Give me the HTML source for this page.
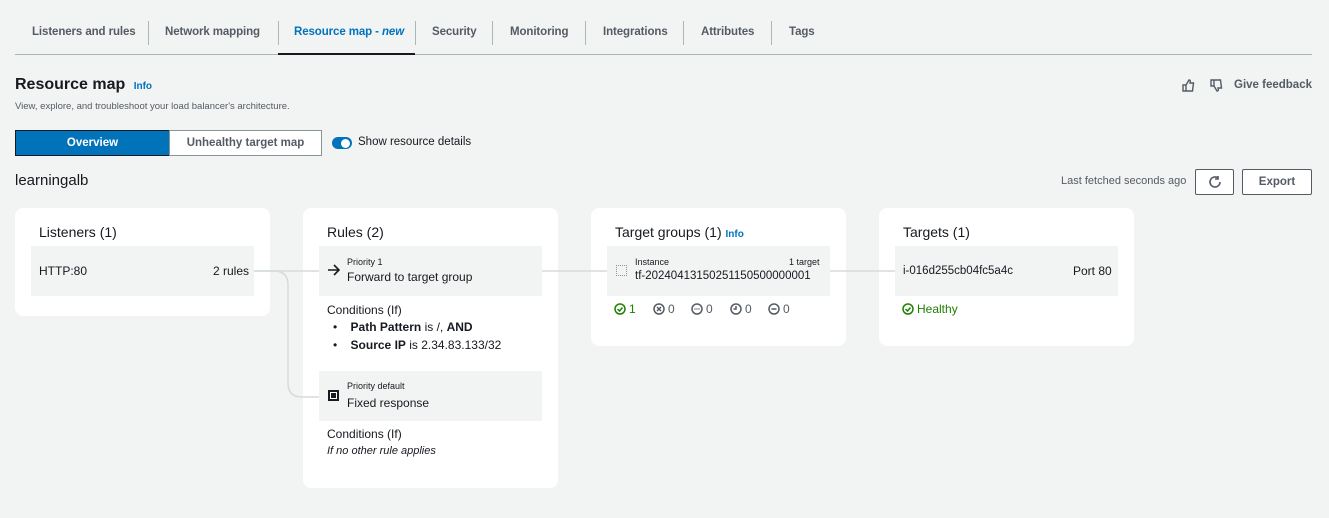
<!DOCTYPE html>
<html><head><style>
*{margin:0;padding:0;box-sizing:border-box}
body{width:1329px;height:518px;background:#f2f3f3;font-family:"Liberation Sans",sans-serif;color:#16191f;position:relative;overflow:hidden;font-size:12px}
.a{position:absolute;white-space:nowrap}
.tab{position:absolute;top:26px;font-size:11.5px;font-weight:bold;color:#545b64;letter-spacing:-0.1px}
.sep{position:absolute;top:21px;width:1px;height:24px;background:#aab7b8}
.card{position:absolute;background:#fff;border-radius:8px}
.box{position:absolute;background:#f2f3f3}
.h{font-size:14px;color:#16191f}
.info{color:#0073bb;font-weight:bold;font-size:10px}
.st{position:absolute;top:302px;font-size:12px;color:#545b64;display:flex;align-items:center;gap:3px}
svg{display:block}
</style></head><body>
<div class="tab" style="left:32px">Listeners and rules</div>
<div class="sep" style="left:148px"></div>
<div class="tab" style="left:165px">Network mapping</div>
<div class="sep" style="left:278px"></div>
<div class="tab" style="left:294px;color:#0073bb">Resource map - <i>new</i></div>
<div class="sep" style="left:415px"></div>
<div class="tab" style="left:432px">Security</div>
<div class="sep" style="left:492px"></div>
<div class="tab" style="left:510px">Monitoring</div>
<div class="sep" style="left:585px"></div>
<div class="tab" style="left:603px">Integrations</div>
<div class="sep" style="left:683px"></div>
<div class="tab" style="left:701px">Attributes</div>
<div class="sep" style="left:771px"></div>
<div class="tab" style="left:789px">Tags</div>
<div class="a" style="left:15px;top:54px;width:1297px;height:1px;background:#aab7b8"></div>
<div class="a" style="left:278px;top:53px;width:137px;height:2px;background:#16191f"></div>

<div class="a" style="left:15px;top:76px;font-size:16px;font-weight:bold">Resource map <span class="info" style="margin-left:4px">Info</span></div>
<div class="a" style="left:15px;top:101px;font-size:9.5px;color:#545b64">View, explore, and troubleshoot your load balancer's architecture.</div>
<svg class="a" style="left:1182px;top:79px" width="13" height="13" viewBox="0 0 13 13" fill="none" stroke="#545b64" stroke-width="1.4"><path d="M1 6h3v6H1zM4 6l3-5c1.5 0 1.5 1 1 3h3.5l-1 8H4"/></svg>
<svg class="a" style="left:1210px;top:79px" width="13" height="13" viewBox="0 0 13 13" fill="none" stroke="#545b64" stroke-width="1.4"><path d="M1 1h3v6H1zM4 7l3 5c1.5 0 1.5-1 1-3h3.5l-1-8H4"/></svg>
<div class="a" style="left:1234px;top:79px;font-size:11.5px;font-weight:bold;color:#545b64">Give feedback</div>

<div class="a" style="left:15px;top:130px;width:155px;height:26px;background:#0073bb;border:1px solid #16191f;color:#fff;font-weight:bold;text-align:center;line-height:24px;font-size:11.5px">Overview</div>
<div class="a" style="left:169px;top:130px;width:153px;height:26px;background:#fff;border:1px solid #879596;color:#545b64;font-weight:bold;text-align:center;line-height:24px;font-size:11.5px">Unhealthy target map</div>
<div class="a" style="left:332px;top:137px;width:20px;height:12px;border-radius:6px;background:#0073bb"></div>
<div class="a" style="left:341px;top:139px;width:9px;height:9px;border-radius:50%;background:#fff"></div>
<div class="a" style="left:358px;top:136px;font-size:11.5px">Show resource details</div>

<div class="a" style="left:15px;top:172px;font-size:15px">learningalb</div>
<div class="a" style="left:1061px;top:175px;font-size:11px;color:#545b64">Last fetched seconds ago</div>
<div class="a" style="left:1195px;top:169px;width:39px;height:26px;background:#fff;border:1px solid #545b64;border-radius:2px"></div>
<svg class="a" style="left:1208px;top:175px" width="14" height="14" viewBox="0 0 14 14" fill="none" stroke="#545b64" stroke-width="1.6"><path d="M12 7a5 5 0 1 1-2-4"/><path d="M10 1v3h-3"/></svg>
<div class="a" style="left:1242px;top:169px;width:70px;height:26px;background:#fff;border:1px solid #545b64;border-radius:2px;text-align:center;line-height:24px;font-weight:bold;color:#545b64;font-size:11.5px">Export</div>

<div class="card" style="left:15px;top:208px;width:255px;height:108px"></div>
<div class="card" style="left:303px;top:208px;width:255px;height:280px"></div>
<div class="card" style="left:591px;top:208px;width:255px;height:138px"></div>
<div class="card" style="left:879px;top:208px;width:255px;height:138px"></div>

<svg class="a" style="left:0;top:0" width="1329" height="518" fill="none" stroke="#d5dbdb" stroke-width="1.5">
<path d="M254 271H319M542 271H607M830 271H895"/>
<path d="M254 271H274Q288 271 288 285V383Q288 397 302 397H319"/>
</svg>

<div class="a h" style="left:39px;top:224px">Listeners (1)</div>
<div class="box" style="left:31px;top:246px;width:223px;height:50px"></div>
<div class="a" style="left:39px;top:264px">HTTP:80</div>
<div class="a" style="left:213px;top:264px">2 rules</div>

<div class="a h" style="left:327px;top:224px">Rules (2)</div>
<div class="box" style="left:319px;top:246px;width:223px;height:50px"></div>
<svg class="a" style="left:327px;top:264px" width="13" height="12" viewBox="0 0 13 12" fill="none" stroke="#16191f" stroke-width="1.6"><path d="M1 6h11M7 1l5 5-5 5"/></svg>
<div class="a" style="left:347px;top:257px;font-size:9px">Priority 1</div>
<div class="a" style="left:347px;top:270px">Forward to target group</div>
<div class="a" style="left:327px;top:303px">Conditions (If)</div>
<div class="a" style="left:333px;top:320px">&bull;&nbsp;&nbsp;&nbsp;&nbsp;<b>Path Pattern</b> is /, <b>AND</b></div>
<div class="a" style="left:333px;top:338px">&bull;&nbsp;&nbsp;&nbsp;&nbsp;<b>Source IP</b> is 2.34.83.133/32</div>
<div class="box" style="left:319px;top:371px;width:223px;height:50px"></div>
<div class="a" style="left:328px;top:390px;width:11px;height:11px;border:2px solid #16191f;background:#16191f;box-shadow:inset 0 0 0 1px #fff"></div>
<div class="a" style="left:347px;top:381px;font-size:9px">Priority default</div>
<div class="a" style="left:347px;top:396px">Fixed response</div>
<div class="a" style="left:327px;top:427px">Conditions (If)</div>
<div class="a" style="left:327px;top:445px;font-style:italic;font-size:11px">If no other rule applies</div>

<div class="a h" style="left:615px;top:224px">Target groups (1) <span class="info">Info</span></div>
<div class="box" style="left:607px;top:246px;width:223px;height:50px"></div>
<div class="a" style="left:616px;top:265px;width:11px;height:11px;border:1px dotted #879596"></div>
<div class="a" style="left:635px;top:257px;font-size:9px">Instance</div>
<div class="a" style="left:789px;top:257px;font-size:9px">1 target</div>
<div class="a" style="left:635px;top:270px;font-size:11.5px">tf-20240413150251150500000001</div>

<div class="st" style="left:614px;color:#1d8102"><svg width="12" height="12" viewBox="0 0 12 12" fill="none" stroke="#1d8102" stroke-width="1.5"><circle cx="6" cy="6" r="5"/><path d="M3.5 6l2 2 3-3.5"/></svg>1</div>
<div class="st" style="left:653px"><svg width="12" height="12" viewBox="0 0 12 12" fill="none" stroke="#545b64" stroke-width="1.5"><circle cx="6" cy="6" r="5"/><path d="M4 4l4 4M8 4l-4 4"/></svg>0</div>
<div class="st" style="left:691px"><svg width="12" height="12" viewBox="0 0 12 12" fill="none" stroke="#545b64" stroke-width="1.5"><circle cx="6" cy="6" r="5"/><path d="M3.5 6h1M5.5 6h1M7.5 6h1"/></svg>0</div>
<div class="st" style="left:730px"><svg width="12" height="12" viewBox="0 0 12 12" fill="none" stroke="#545b64" stroke-width="1.5"><circle cx="6" cy="6" r="5"/><path d="M6 3v3H3.5"/></svg>0</div>
<div class="st" style="left:768px"><svg width="12" height="12" viewBox="0 0 12 12" fill="none" stroke="#545b64" stroke-width="1.5"><circle cx="6" cy="6" r="5"/><path d="M3.5 6h5"/></svg>0</div>

<div class="a h" style="left:903px;top:224px">Targets (1)</div>
<div class="box" style="left:895px;top:246px;width:223px;height:50px"></div>
<div class="a" style="left:903px;top:265px;font-size:11.5px">i-016d255cb04fc5a4c</div>
<div class="a" style="left:1073px;top:264px">Port 80</div>
<div class="st" style="left:902px;color:#1d8102"><svg width="12" height="12" viewBox="0 0 12 12" fill="none" stroke="#1d8102" stroke-width="1.5"><circle cx="6" cy="6" r="5"/><path d="M3.5 6l2 2 3-3.5"/></svg>Healthy</div>
</body></html>
